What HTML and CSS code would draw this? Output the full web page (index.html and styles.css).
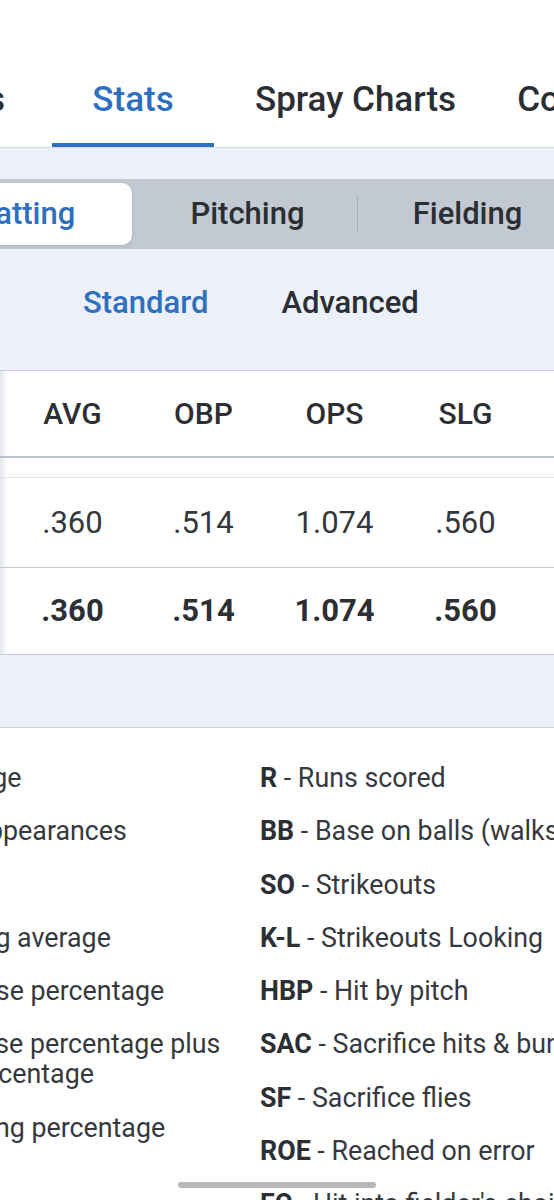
FILE: index.html
```html
<!DOCTYPE html>
<html lang="en">
<head>
<meta charset="utf-8">
<title>Stats</title>
<link rel="stylesheet" href="styles.css">
</head>
<body>
<div class="page">
  <nav class="tabbar">
    <div class="tabs">
      <a class="tab">Games</a>
      <a class="tab active">Stats</a>
      <a class="tab">Spray Charts</a>
      <a class="tab">Coaching</a>
    </div>
  </nav>

  <section class="controls">
    <div class="segmented">
      <div class="seg selected">Batting</div>
      <div class="seg">Pitching</div>
      <div class="seg-divider"></div>
      <div class="seg">Fielding</div>
    </div>
    <div class="subtabs">
      <span class="subtab active">Standard</span>
      <span class="subtab">Advanced</span>
    </div>
  </section>

  <section class="stats-table">
    <div class="trow head">
      <div class="cell">AVG</div>
      <div class="cell">OBP</div>
      <div class="cell">OPS</div>
      <div class="cell">SLG</div>
    </div>
    <div class="spacer"></div>
    <div class="trow row">
      <div class="cell">.360</div>
      <div class="cell">.514</div>
      <div class="cell">1.074</div>
      <div class="cell">.560</div>
    </div>
    <div class="trow row total">
      <div class="cell">.360</div>
      <div class="cell">.514</div>
      <div class="cell">1.074</div>
      <div class="cell">.560</div>
    </div>
  </section>

  <div class="band"></div>

  <section class="legend">
    <ul class="legend-col">
      <li><b>AVG</b> - Average</li>
      <li><b>PA</b> - Plate appearances</li>
      <li><b>AB</b> - At bats</li>
      <li><b>AVG</b> - Batting average</li>
      <li><b>OBP</b> - On-base percentage</li>
      <li><b>OPS</b> - On-base percentage plus slugging percentage</li>
      <li><b>SLG</b> - Slugging percentage</li>
      <li><b>H</b> - Hits</li>
      <li><b>1B</b> - Singles</li>
    </ul>
    <ul class="legend-col">
      <li><b>R</b> - Runs scored</li>
      <li><b>BB</b> - Base on balls (walks)</li>
      <li><b>SO</b> - Strikeouts</li>
      <li><b>K-L</b> - Strikeouts Looking</li>
      <li><b>HBP</b> - Hit by pitch</li>
      <li><b>SAC</b> - Sacrifice hits &amp; bunts</li>
      <li><b>SF</b> - Sacrifice flies</li>
      <li><b>ROE</b> - Reached on error</li>
      <li><b>FC</b> - Hit into fielder's choice</li>
    </ul>
  </section>

  <div class="scroll-indicator"></div>
</div>
</body>
</html>
```

FILE: styles.css
```css
html, body {
  margin: 0;
  padding: 0;
  overflow: hidden;
}

body {
  background: #ffffff;
  font-family: Roboto, "Liberation Sans", Arial, sans-serif;
  color: #2c2f34;
}

.page {
  position: relative;
  width: 554px;
  height: 1200px;
  overflow: hidden;
}

/* Top tabs */
.tabbar {
  height: 148px;
  box-sizing: border-box;
  border-bottom: 1px solid #d4dae3;
  display: flex;
  align-items: flex-end;
}

.tabs {
  display: flex;
  gap: 21px;
  margin-left: -131px;
  flex: none;
}

.tab {
  min-width: 162px;
  box-sizing: border-box;
  padding: 0 20px 23px;
  border-bottom: 4px solid transparent;
  font-size: 35px;
  line-height: 40px;
  font-weight: 500;
  text-align: center;
  white-space: nowrap;
  color: #2b2e33;
}

.tab.active {
  color: #2f6fbf;
  border-bottom-color: #2f6fbf;
}

/* Controls */
.controls {
  background: #ecf0f8;
  padding-top: 31px;
}

.segmented {
  display: flex;
  align-items: center;
  width: 700px;
  height: 70px;
  box-sizing: border-box;
  padding: 4px;
  margin-left: -85px;
  background: #c3c9d2;
}

.seg {
  flex: none;
  width: 219px;
  height: 62px;
  line-height: 62px;
  font-size: 31px;
  font-weight: 500;
  text-align: center;
  color: #2b2e33;
}

.seg.selected {
  width: 213px;
  margin-right: 6px;
  background: #ffffff;
  border-radius: 10px;
  box-shadow: 0 1px 4px rgba(0, 0, 0, 0.12);
  color: #2f6fbf;
}

.seg-divider {
  flex: none;
  width: 1px;
  height: 37px;
  background: #a8b0bb;
}

.subtabs {
  display: flex;
  gap: 73px;
  padding: 34px 0 47px 83px;
  font-size: 31px;
  line-height: 40px;
  font-weight: 500;
  color: #2b2e33;
}

.subtab.active {
  color: #2f6fbf;
}

/* Table */
.stats-table {
  border-top: 1px solid #cbd1da;
  background: linear-gradient(90deg, #e3e6eb 0, #ffffff 8px);
}

.trow {
  display: flex;
  padding-left: 7px;
}

.cell {
  flex: none;
  width: 131px;
  text-align: center;
  font-size: 31px;
  white-space: nowrap;
}

.head {
  height: 85px;
  line-height: 85px;
  border-bottom: 2px solid #b9c1cc;
}

.head .cell {
  font-size: 30px;
  font-weight: 500;
}

.spacer {
  height: 19px;
  border-bottom: 1px solid #dfe3ea;
}

.row {
  height: 89px;
  line-height: 89px;
  border-bottom: 1px solid #c4cbd5;
  color: #34373c;
}

.row.total {
  height: 86px;
  line-height: 86px;
  font-weight: 700;
  color: #2c2f34;
}

.band {
  height: 72px;
  background: #ecf0f8;
  border-bottom: 1px solid #cdd3dc;
}

/* Legend */
.legend {
  display: grid;
  grid-template-columns: 380px 420px;
  column-gap: 28px;
  width: 828px;
  margin-left: -148px;
  padding-top: 35px;
  font-size: 26.8px;
  line-height: 30px;
  color: #36393e;
}

.legend-col {
  list-style: none;
  margin: 0;
  padding: 0;
  display: flex;
  flex-direction: column;
  gap: 23.25px;
}

.legend-col:last-child li {
  white-space: nowrap;
}

.legend b {
  font-weight: 700;
  color: #2c2f34;
}

/* Horizontal scroll indicator overlay */
.scroll-indicator {
  position: absolute;
  left: 178px;
  top: 1182px;
  width: 198px;
  height: 6px;
  border-radius: 3px;
  background: #b8b8b8;
}
```
